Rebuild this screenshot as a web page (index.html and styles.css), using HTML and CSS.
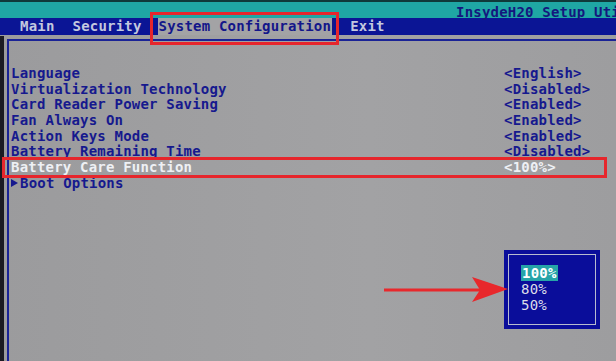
FILE: index.html
```html
<!DOCTYPE html>
<html lang="en">
<head>
  <meta charset="UTF-8">
  <title>InsydeH2O Setup Utility</title>
  <link rel="stylesheet" href="styles.css">
</head>
<body>
  <div class="screen">
    <div class="titlebar">InsydeH20 Setup Utility</div>

    <div class="menubar">
      <span class="menu-item">Main</span>
      <span class="menu-item">Security</span>
      <span class="menu-item active">System Configuration</span>
      <span class="menu-item">Exit</span>
    </div>

    <div class="body-area">
      <div class="edge"></div>
      <div class="panel">
        <ul class="settings">
          <li class="row"><span>Language</span><span class="value">&lt;English&gt;</span></li>
          <li class="row"><span>Virtualization Technology</span><span class="value">&lt;Disabled&gt;</span></li>
          <li class="row"><span>Card Reader Power Saving</span><span class="value">&lt;Enabled&gt;</span></li>
          <li class="row"><span>Fan Always On</span><span class="value">&lt;Enabled&gt;</span></li>
          <li class="row"><span>Action Keys Mode</span><span class="value">&lt;Enabled&gt;</span></li>
          <li class="row"><span>Battery Remaining Time</span><span class="value">&lt;Disabled&gt;</span></li>
          <li class="row selected"><span>Battery Care Function</span><span class="value">&lt;100%&gt;</span></li>
          <li class="row"><span><span class="arrow"></span>Boot Options</span></li>
        </ul>
      </div>
    </div>

    <!-- popup list for the selected option -->
    <div class="popup">
      <div class="popup-inner">
        <div class="popup-item current">100%</div>
        <div class="popup-item">80%</div>
        <div class="popup-item">50%</div>
      </div>
    </div>

    <!-- red annotations -->
    <div class="mark mark-tab"></div>
    <div class="mark mark-row"></div>
    <svg class="pointer" width="130" height="30" viewBox="0 0 130 30">
      <path d="M0 11.5 L96 11.5 L96 14.5 L0 14.5 Z" fill="#e8282c"/>
      <path d="M88 0 L124 12 L88 25 L96 13 Z" fill="#e8282c"/>
    </svg>
  </div>
</body>
</html>
```

FILE: styles.css
```css
* {
  margin: 0;
  padding: 0;
  box-sizing: border-box;
}

body {
  background-color: #9e9ea0;
  font-family: "DejaVu Sans Mono", "Liberation Mono", monospace;
  font-weight: bold;
  font-size: 14px;
  letter-spacing: 0.2px;
  overflow: hidden;
}

.screen {
  position: relative;
  width: 616px;
  height: 361px;
  overflow: hidden;
  background: linear-gradient(90deg, #9b9b9d, #a2a2a4 60%, #9d9d9f);
}

.titlebar {
  height: 18px;
  background-color: #1fa7a4;
  color: #14177e;
  white-space: nowrap;
  padding-left: 456px;
  line-height: 20px;
  border-top: 2px solid #0f3a3a;
}

.menubar {
  height: 17px;
  background-color: #0b1595;
  display: flex;
  padding-left: 20px;
  white-space: nowrap;
}

.menu-item {
  color: #c3c8df;
  line-height: 17px;
  margin-right: 18px;
}

.menu-item.active {
  background-color: #a3a3a5;
  color: #13168a;
  margin-left: -2px;
  padding: 0 1px;
  margin-right: 16px;
  border-right: 2px solid #13168a;
}

.body-area {
  display: flex;
  height: 326px;
}

.edge {
  width: 4px;
  background-color: #1b1b22;
  margin-top: 1px;
}

.panel {
  flex: 1;
  margin-top: 4px;
  margin-left: 3px;
  border-top: 2px solid #1a2396;
  border-left: 2px solid #1a2396;
  padding-top: 25px;
}

.settings {
  list-style: none;
  padding-left: 2px;
}

.row {
  display: flex;
  height: 15.7px;
  line-height: 15.7px;
  color: #16198e;
  white-space: nowrap;
}

.row > span:first-child {
  width: 493px;
}

.row.selected {
  color: #eef0f4;
}

.arrow {
  display: inline-block;
  width: 0;
  height: 0;
  border-top: 4px solid transparent;
  border-bottom: 4px solid transparent;
  border-left: 7px solid #16198e;
  margin-right: 2px;
  vertical-align: 1px;
}

.popup {
  position: absolute;
  left: 504px;
  top: 250px;
  width: 96px;
  height: 79px;
  background-color: #0a0d9a;
  padding: 4px;
}

.popup-inner {
  height: 100%;
  border: 1px solid #b8bbcf;
  padding: 10px 0 0 12px;
}

.popup-item {
  color: #dcdde8;
  font-weight: normal;
  line-height: 16px;
  height: 16px;
}

.popup-item.current {
  display: inline-block;
  background-color: #26a4a8;
  color: #ffffff;
  font-weight: bold;
  padding: 0 1px;
}

.mark {
  position: absolute;
  border: 3px solid #e6262c;
}

.mark-tab {
  left: 150px;
  top: 12px;
  width: 189px;
  height: 33px;
}

.mark-row {
  left: 2px;
  top: 157px;
  width: 605px;
  height: 21px;
}

.pointer {
  position: absolute;
  left: 384px;
  top: 277px;
}
```
